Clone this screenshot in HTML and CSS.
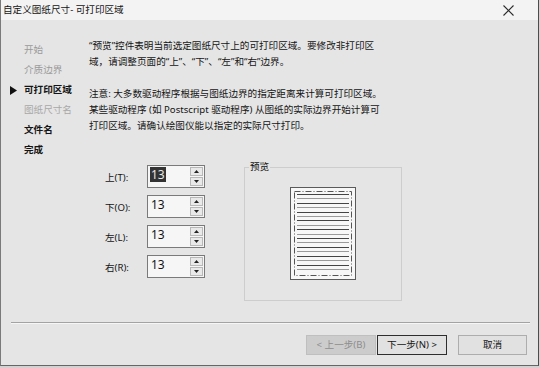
FILE: index.html
```html
<html>
<head>
  <link rel="stylesheet" href="styles.css">
</head>
<body>
  <div id="janela">
    <div class="titulo">
      <span>自定义图纸尺寸- 可打印区域</span>
      <svg class="fechar" width="11" height="11" viewBox="0 0 11 11"><path d="M0.5 0.5L10.5 10.5M10.5 0.5L0.5 10.5" stroke="#2a2a2a" stroke-width="1.1"/></svg>
    </div>

    <div class="corpo">
      <div class="passos">
        <div class="passo feito"><span class="marca"></span>开始</div>
        <div class="passo feito"><span class="marca"></span>介质边界</div>
        <div class="passo atual"><span class="marca"><svg width="7" height="9" viewBox="0 0 7 9"><path d="M0 0L7 4.5L0 9Z" fill="#111"/></svg></span>可打印区域</div>
        <div class="passo inativo"><span class="marca"></span>图纸尺寸名</div>
        <div class="passo"><span class="marca"></span>文件名</div>
        <div class="passo"><span class="marca"></span>完成</div>
      </div>

      <div class="conteudo">
        <p>“预览”控件表明当前选定图纸尺寸上的可打印区域。要修改非打印区<br>域，请调整页面的“上”、“下”、“左”和“右”边界。</p>
        <p class="nota">注意: 大多数驱动程序根据与图纸边界的指定距离来计算可打印区域。<br>某些驱动程序 (如 Postscript 驱动程序) 从图纸的实际边界开始计算可<br>打印区域。请确认绘图仪能以指定的实际尺寸打印。</p>

        <div class="formulario">
          <div class="campos">
            <div class="linha">
              <label>上(T):</label>
              <div class="spin">
                <div class="valor"><span class="sel">13</span></div>
                <div class="setas">
                  <div class="seta"><svg width="5" height="3" viewBox="0 0 5 3"><path d="M0 3L2.5 0L5 3Z" fill="#222"/></svg></div>
                  <div class="seta"><svg width="5" height="3" viewBox="0 0 5 3"><path d="M0 0L2.5 3L5 0Z" fill="#222"/></svg></div>
                </div>
              </div>
            </div>
            <div class="linha">
              <label>下(O):</label>
              <div class="spin">
                <div class="valor"><span>13</span></div>
                <div class="setas">
                  <div class="seta"><svg width="5" height="3" viewBox="0 0 5 3"><path d="M0 3L2.5 0L5 3Z" fill="#222"/></svg></div>
                  <div class="seta"><svg width="5" height="3" viewBox="0 0 5 3"><path d="M0 0L2.5 3L5 0Z" fill="#222"/></svg></div>
                </div>
              </div>
            </div>
            <div class="linha">
              <label>左(L):</label>
              <div class="spin">
                <div class="valor"><span>13</span></div>
                <div class="setas">
                  <div class="seta"><svg width="5" height="3" viewBox="0 0 5 3"><path d="M0 3L2.5 0L5 3Z" fill="#222"/></svg></div>
                  <div class="seta"><svg width="5" height="3" viewBox="0 0 5 3"><path d="M0 0L2.5 3L5 0Z" fill="#222"/></svg></div>
                </div>
              </div>
            </div>
            <div class="linha">
              <label>右(R):</label>
              <div class="spin">
                <div class="valor"><span>13</span></div>
                <div class="setas">
                  <div class="seta"><svg width="5" height="3" viewBox="0 0 5 3"><path d="M0 3L2.5 0L5 3Z" fill="#222"/></svg></div>
                  <div class="seta"><svg width="5" height="3" viewBox="0 0 5 3"><path d="M0 0L2.5 3L5 0Z" fill="#222"/></svg></div>
                </div>
              </div>
            </div>
          </div>

          <fieldset class="previa">
            <legend>预览</legend>
            <svg class="pagina" width="66" height="93" viewBox="0 0 66 93">
              <rect x="0.5" y="0.5" width="65" height="92" fill="#f7f7f7" stroke="#5a5a5a"/>
              <rect x="4.5" y="4.5" width="57" height="84" fill="none" stroke="#555" stroke-dasharray="6 2 1 2"/>
              <g stroke-width="1">
                <path d="M7 7.5H59" stroke="#444"/>
                <path d="M7 11.5H59" stroke="#9a9a9a"/>
                <path d="M7 16.5H59" stroke="#444"/>
                <path d="M7 20.5H59" stroke="#9a9a9a"/>
                <path d="M7 25.5H59" stroke="#444"/>
                <path d="M7 29.5H59" stroke="#9a9a9a"/>
                <path d="M7 33.5H59" stroke="#444"/>
                <path d="M7 38.5H59" stroke="#9a9a9a"/>
                <path d="M7 42.5H59" stroke="#444"/>
                <path d="M7 47.5H59" stroke="#9a9a9a"/>
                <path d="M7 51.5H59" stroke="#444"/>
                <path d="M7 55.5H59" stroke="#9a9a9a"/>
                <path d="M7 60.5H59" stroke="#444"/>
                <path d="M7 64.5H59" stroke="#9a9a9a"/>
                <path d="M7 69.5H59" stroke="#444"/>
                <path d="M7 73.5H59" stroke="#9a9a9a"/>
                <path d="M7 78.5H59" stroke="#444"/>
                <path d="M7 82.5H59" stroke="#9a9a9a"/>
              </g>
            </svg>
          </fieldset>
        </div>
      </div>
    </div>

    <div class="separador"></div>

    <div class="botoes">
      <div class="botao desativado">&lt; 上一步(B)</div>
      <div class="botao padrao">下一步(N) &gt;</div>
      <div class="botao cancelar">取消</div>
    </div>
  </div>
</body>
</html>
```

FILE: styles.css
```css
* {
    box-sizing: border-box;
    margin: 0;
    padding: 0;
}

body {
    background-color: #d2d2d2;
    font-family: "Noto Sans", "Noto Sans CJK SC", sans-serif;
    font-size: 9.6px;
    color: #141414;
}

#janela {
    width: 539px;
    height: 366px;
    background-color: #e5e5e5;
    border-left: 1px solid #7a7a7a;
    border-right: 1px solid #4c4c4c;
    border-bottom: 1px solid #666;
    display: flex;
    flex-direction: column;
}

.titulo {
    height: 20px;
    background-color: #f3f3f3;
    display: flex;
    align-items: center;
    justify-content: space-between;
    padding-left: 2px;
    padding-right: 24px;
    line-height: 20px;
}

.corpo {
    height: 302px;
    display: flex;
}

.passos {
    width: 88px;
    padding-top: 20px;
    padding-left: 9px;
}

.passo {
    height: 20px;
    line-height: 20px;
    display: flex;
    align-items: center;
    color: #141414;
    font-weight: bold;
}

.marca {
    width: 14px;
    display: flex;
    align-items: center;
}

.feito {
    color: #9a9a9a;
    font-weight: normal;
}

.inativo {
    color: #a8a8a8;
    font-weight: normal;
}

.conteudo {
    flex: 1;
    padding-top: 18px;
}

.conteudo p {
    line-height: 16px;
}

.nota {
    margin-top: 16px;
}

.formulario {
    display: flex;
    align-items: flex-start;
    margin-top: 31px;
    padding-left: 16px;
}

.campos {
    width: 139px;
    display: flex;
    flex-direction: column;
    gap: 7px;
}

.linha {
    display: flex;
    align-items: center;
    height: 23px;
}

.linha label {
    width: 42px;
}

.spin {
    width: 58px;
    height: 23px;
    border: 1px solid #7a7a7a;
    background-color: #f6f6f6;
    display: flex;
}

.valor {
    flex: 1;
    padding: 1px 0 0 2px;
    font-size: 12px;
    line-height: 15px;
}

.valor span {
    display: inline-block;
    padding: 0 1px;
}

.valor .sel {
    background-color: #333;
    color: #e8e8e8;
}

.setas {
    width: 14px;
    padding: 1px 1px 1px 0;
    display: flex;
    flex-direction: column;
    gap: 1px;
}

.seta {
    flex: 1;
    border: 1px solid #b8b8b8;
    background-color: #e9e9e9;
    display: flex;
    align-items: center;
    justify-content: center;
}

.seta svg {
    display: block;
}

.previa {
    width: 158px;
    height: 142px;
    margin-top: -6px;
    border: 1px solid #cdcdcd;
    padding-top: 12px;
}

.previa legend {
    margin-left: 4px;
    padding: 0 1px;
    line-height: 16px;
}

.pagina {
    display: block;
    margin: 0 auto;
}

.separador {
    height: 2px;
    margin: 0 8px 0 10px;
    border-top: 1px solid #a3a3a3;
    border-bottom: 1px solid #f6f6f6;
}

.botoes {
    flex: 1;
    display: flex;
    justify-content: flex-end;
    align-items: flex-start;
    padding-top: 11px;
    padding-right: 11px;
}

.botao {
    width: 70px;
    height: 20px;
    line-height: 18px;
    text-align: center;
    border: 1px solid #adadad;
    background-color: #e1e1e1;
}

.desativado {
    background-color: #cccccc;
    border-color: #bfbfbf;
    color: #8c8c8c;
    margin-right: 1px;
}

.padrao {
    border-color: #2e2e2e;
    margin-right: 11px;
}

.cancelar {
    width: 69px;
}
```
